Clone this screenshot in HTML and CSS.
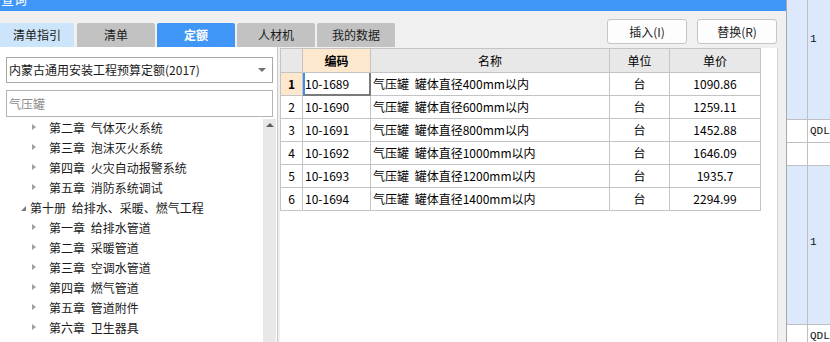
FILE: index.html
```html
<!DOCTYPE html>
<html lang="zh-CN">
<head>
  <meta charset="UTF-8" />
  <title>查询</title>
  <link rel="stylesheet" href="styles.css">
</head>
<body>
  <div class="app">
    <div class="dialog">
      <div class="titlebar"><span class="title">查询</span></div>

      <div class="topbar">
        <div class="tabs">
          <div class="tab tab-guide">清单指引</div>
          <div class="tab">清单</div>
          <div class="tab tab-active">定额</div>
          <div class="tab">人材机</div>
          <div class="tab">我的数据</div>
        </div>
        <div class="actions">
          <button class="btn">插入(I)</button>
          <button class="btn">替换(R)</button>
        </div>
      </div>

      <div class="main">
        <!-- left: quota library tree -->
        <div class="side">
          <div class="select">内蒙古通用安装工程预算定额(2017)<span class="select-arrow"></span></div>
          <div class="search">气压罐</div>
          <div class="tree-wrap">
            <div class="tree">
              <div class="node child"><span class="caret"></span>第二章 气体灭火系统</div>
              <div class="node child"><span class="caret"></span>第三章 泡沫灭火系统</div>
              <div class="node child"><span class="caret"></span>第四章 火灾自动报警系统</div>
              <div class="node child"><span class="caret"></span>第五章 消防系统调试</div>
              <div class="node book"><span class="caret-open"></span>第十册 给排水、采暖、燃气工程</div>
              <div class="node child"><span class="caret"></span>第一章 给排水管道</div>
              <div class="node child"><span class="caret"></span>第二章 采暖管道</div>
              <div class="node child"><span class="caret"></span>第三章 空调水管道</div>
              <div class="node child"><span class="caret"></span>第四章 燃气管道</div>
              <div class="node child"><span class="caret"></span>第五章 管道附件</div>
              <div class="node child"><span class="caret"></span>第六章 卫生器具</div>
            </div>
            <div class="scrollbar"></div>
          </div>
        </div>

        <!-- right: search result grid -->
        <div class="grid-pane">
          <div class="grid">
            <div class="cell head"></div>
            <div class="cell head head-sorted">编码</div>
            <div class="cell head">名称</div>
            <div class="cell head">单位</div>
            <div class="cell head">单价</div>

            <div class="cell rn rn-current">1</div>
            <div class="cell code cell-focus">10-1689</div>
            <div class="cell name">气压罐 罐体直径400mm以内</div>
            <div class="cell unit">台</div>
            <div class="cell price">1090.86</div>

            <div class="cell rn">2</div>
            <div class="cell code">10-1690</div>
            <div class="cell name">气压罐 罐体直径600mm以内</div>
            <div class="cell unit">台</div>
            <div class="cell price">1259.11</div>

            <div class="cell rn">3</div>
            <div class="cell code">10-1691</div>
            <div class="cell name">气压罐 罐体直径800mm以内</div>
            <div class="cell unit">台</div>
            <div class="cell price">1452.88</div>

            <div class="cell rn">4</div>
            <div class="cell code">10-1692</div>
            <div class="cell name">气压罐 罐体直径1000mm以内</div>
            <div class="cell unit">台</div>
            <div class="cell price">1646.09</div>

            <div class="cell rn">5</div>
            <div class="cell code">10-1693</div>
            <div class="cell name">气压罐 罐体直径1200mm以内</div>
            <div class="cell unit">台</div>
            <div class="cell price">1935.7</div>

            <div class="cell rn">6</div>
            <div class="cell code">10-1694</div>
            <div class="cell name">气压罐 罐体直径1400mm以内</div>
            <div class="cell unit">台</div>
            <div class="cell price">2294.99</div>
          </div>
        </div>
      </div>
    </div>

    <!-- behind the dialog: part of the bill grid -->
    <div class="back-grid">
      <div class="back-inner">
        <div class="bcell block"></div><div class="bcell block">1</div>
        <div class="bcell"></div><div class="bcell">QDL</div>
        <div class="bcell"></div><div class="bcell"></div>
        <div class="bcell block block2"></div><div class="bcell block block2">1</div>
        <div class="bcell"></div><div class="bcell">QDL</div>
      </div>
    </div>
  </div>
</body>
</html>
```

FILE: styles.css
```css
body {
  margin: 0;
  width: 830px;
  height: 342px;
  overflow: hidden;
  font-family: "Noto Sans CJK SC", sans-serif;
  font-size: 12px;
  color: #1a1a1a;
  background: #fff;
}

.app {
  display: flex;
  height: 342px;
}

.dialog {
  width: 786px;
  background: #f0f0f0;
  display: flex;
  flex-direction: column;
}

.titlebar {
  height: 11px;
  background: #4096f7;
  overflow: hidden;
  color: #fff;
}

.title {
  display: block;
  font-size: 13px;
  line-height: 13px;
  margin: -8px 0 0 1px;
}

.topbar {
  height: 36px;
  display: flex;
  justify-content: space-between;
}

.tabs {
  display: flex;
  align-items: flex-end;
  gap: 2px;
}

.tab {
  width: 78px;
  height: 24px;
  line-height: 24px;
  text-align: center;
  background: #c2c2c2;
  border-radius: 2px 2px 0 0;
}

.tab-guide {
  width: 74px;
  margin-right: 1px;
  background: #cde5fa;
  border-radius: 0 2px 0 0;
}

.tab-active {
  background: #4096f7;
  color: #fff;
  font-weight: bold;
}

.actions {
  display: flex;
  align-items: flex-start;
  gap: 10px;
  padding: 8px 9px 0 0;
}

.btn {
  width: 80px;
  height: 25px;
  padding: 0;
  background: #fdfdfd;
  border: 1px solid #c6c6c6;
  border-radius: 3px;
  font-family: inherit;
  font-size: 12px;
  color: #222;
}

.main {
  flex: 1;
  display: flex;
  min-height: 0;
  padding-right: 8px;
}

/* left panel */
.side {
  width: 277px;
  background: #fff;
  border-right: 1px solid #c8c8c8;
  margin-right: 2px;
  padding-top: 10px;
  display: flex;
  flex-direction: column;
}

.select {
  height: 26px;
  margin: 0 4px 0 6px;
  border: 1px solid #a8a8a8;
  box-sizing: border-box;
  padding-left: 2px;
  line-height: 24px;
  display: flex;
  justify-content: space-between;
  align-items: center;
  white-space: nowrap;
}

.select-arrow {
  width: 0;
  height: 0;
  margin-right: 6px;
  border-left: 4px solid transparent;
  border-right: 4px solid transparent;
  border-top: 4px solid #707070;
}

.search {
  height: 27px;
  margin: 7px 4px 0 6px;
  border: 1px solid #b4b4b4;
  box-sizing: border-box;
  padding-left: 2px;
  line-height: 25px;
  color: #8c8c8c;
}

.tree-wrap {
  flex: 1;
  display: flex;
  margin-top: 2px;
  min-height: 0;
}

.tree {
  flex: 1;
  margin-top: -2px;
}

.node {
  height: 20px;
  display: flex;
  align-items: center;
  white-space: nowrap;
  word-spacing: 3px;
}

.node.child {
  padding-left: 32px;
}

.node.book {
  padding-left: 21px;
}

.caret {
  width: 0;
  height: 0;
  margin-right: 13px;
  border-left: 4px solid #a0a0a0;
  border-top: 3px solid transparent;
  border-bottom: 3px solid transparent;
}

.caret-open {
  width: 0;
  height: 0;
  margin-right: 4px;
  margin-top: 2px;
  border-left: 5px solid transparent;
  border-bottom: 5px solid #7a7a7a;
}

.scrollbar {
  width: 13px;
  margin-right: 1px;
  background: #e8e8e8;
}

.scrollbar::before {
  content: "";
  display: block;
  width: 0;
  margin: 4px auto 0;
  border-left: 4px solid transparent;
  border-right: 4px solid transparent;
  border-bottom: 4px solid #606060;
}

/* result grid */
.grid-pane {
  flex: 1;
  margin-top: 1px;
  background: #fff;
  border-right: 1px solid #d4d4d4;
}

.grid {
  display: grid;
  grid-template-columns: 22px 68px 239px 60px 91px;
  width: max-content;
  border-top: 1px solid #c4c4c4;
  border-left: 1px solid #c4c4c4;
  color: #000;
}

.cell {
  height: 23px;
  box-sizing: border-box;
  border-right: 1px solid #c4c4c4;
  border-bottom: 1px solid #c4c4c4;
  line-height: 22px;
  padding: 0 2px;
  white-space: nowrap;
  overflow: hidden;
}

.name {
  word-spacing: 3px;
}

.head {
  height: 24px;
  line-height: 23px;
  background: #e8e8e8;
  text-align: center;
}

.head-sorted {
  background: #fde7cd;
  font-weight: bold;
}

.rn {
  text-align: center;
}

.rn-current {
  background: #fde7cd;
  font-weight: bold;
}

.cell-focus {
  border-right-color: #7a7a7a;
  border-bottom-color: #7a7a7a;
  box-shadow: inset 2px 0 0 #3b8ef0, inset -1px -1px 0 #7a7a7a;
}

.unit,
.price {
  text-align: center;
}

/* grid behind the dialog */
.back-grid {
  flex: 1;
  overflow: hidden;
  border-left: 1px solid #a8a8a8;
  background: #fff;
}

.back-inner {
  display: grid;
  grid-template-columns: 21px 1fr;
  margin-top: -40px;
}

.bcell {
  height: 23px;
  box-sizing: border-box;
  border-right: 1px solid #c0c0c0;
  border-bottom: 1px solid #c0c0c0;
  padding-left: 2px;
  font-family: "Liberation Mono", monospace;
  font-size: 11px;
  line-height: 22px;
  color: #111;
  white-space: nowrap;
}

.block {
  height: 160px;
  line-height: 158px;
  background: #dce8fb;
}

.block2 {
  height: 159px;
  line-height: 152px;
}
```
